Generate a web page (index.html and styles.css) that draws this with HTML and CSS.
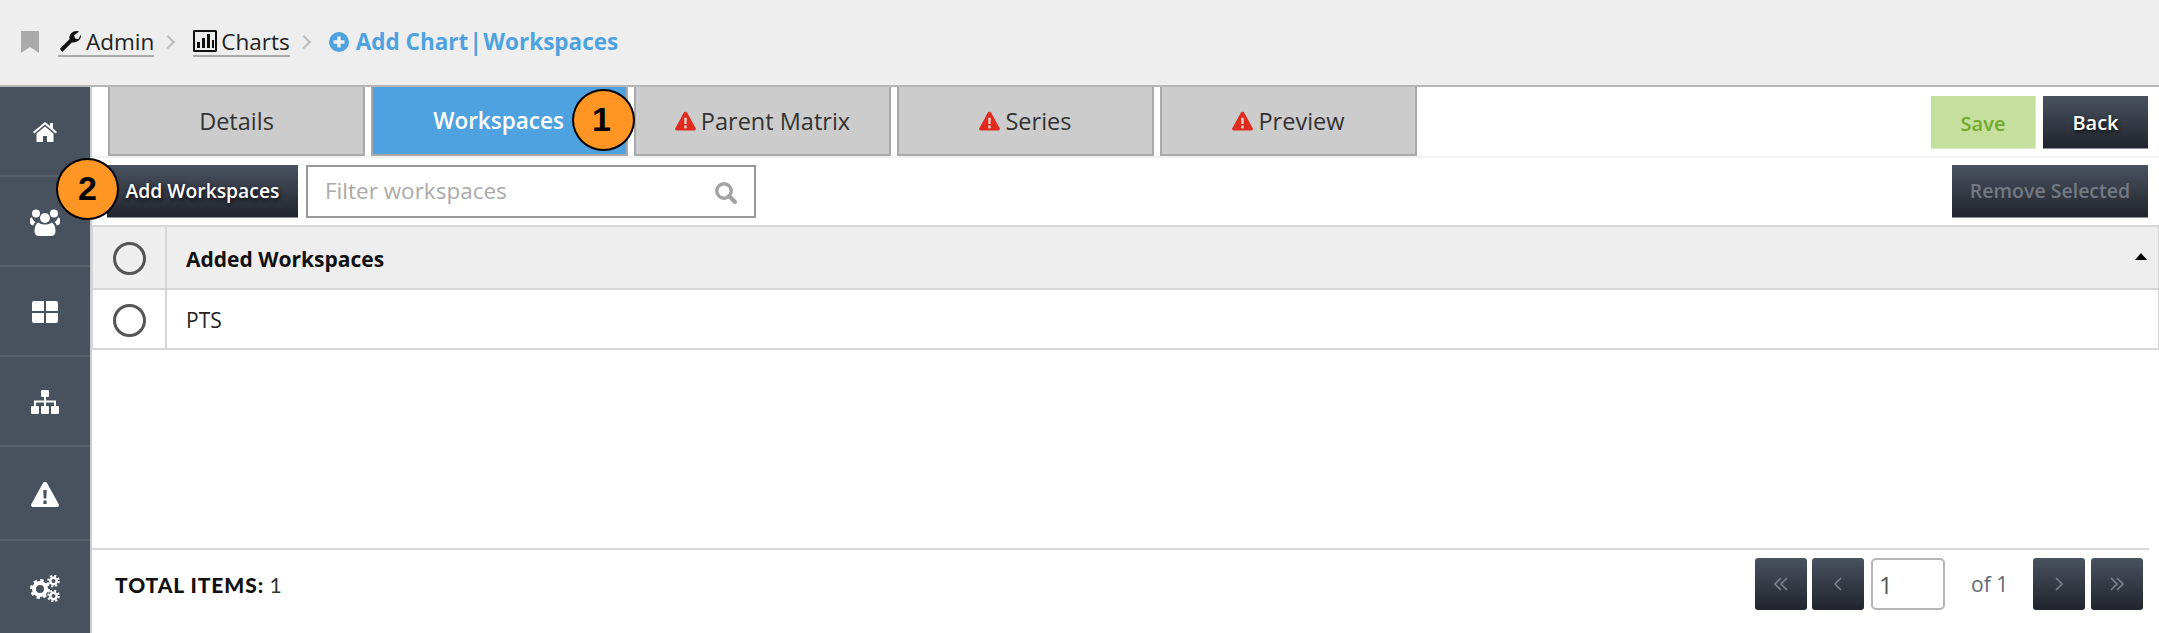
FILE: index.html
```html
<!DOCTYPE html>
<html lang="en">
<head>
  <meta charset="UTF-8">
  <title>Add Chart | Workspaces</title>
  <link rel="stylesheet" href="styles.css">
</head>
<body>
  <svg class="sprites" width="0" height="0">
    <symbol id="warn" viewBox="0 0 28 25">
      <path d="M14 0c1 0 1.800.5 2.300 1.400l11.300 20.700c.9 1.500-.2 2.900-1.800 2.900H2.200C.6 25-.5 23.600.4 22.100L11.700 1.400C12.200.5 13 0 14 0z"/>
      <path fill="#f4d6d2" d="M12.300 8h3.400l-.3 8.500h-2.800zM12.400 18.500h3.200V22h-3.200z"/>
    </symbol>
  </svg>

  <header class="topbar">
    <svg class="bookmark" viewBox="0 0 18 22"><path d="M0 0h18v22l-9-6-9 6z"/></svg>
    <a class="crumb">
      <svg class="crumb-icon" viewBox="0 0 24 24"><path d="M1 20.500 11.500 10C10.500 6 13.500 1 19 1c1 0 2 .2 3 .7l-5.500 4 1 3.500 3.500 1L24 5c.6 5.500-4.500 9.500-10 8.500L3.500 24z"/></svg>
      Admin
    </a>
    <span class="chev"></span>
    <a class="crumb">
      <svg class="crumb-icon" viewBox="0 0 24 22"><path fill-rule="evenodd" d="M0 1.500C0 .7.700 0 1.500 0h21c.8 0 1.500.7 1.500 1.500v19c0 .8-.7 1.500-1.500 1.500h-21C.7 22 0 21.300 0 20.500zM2 2v18h20V2z"/><path d="M4 12h3v6H4zM9 8h3v10H9zM14 4h3v14h-3zM19 10h2v8h-2z"/></svg>
      Charts
    </a>
    <span class="chev"></span>
    <svg class="add-icon" viewBox="0 0 20 20"><path fill-rule="evenodd" d="M10 0a10 10 0 1 1 0 20 10 10 0 0 1 0-20zM8.300 4.500v3.800H4.500v3.400h3.800v3.800h3.400v-3.800h3.800V8.300h-3.800V4.500z"/></svg>
    <span class="crumb-current">Add Chart<span class="pipe">|</span>Workspaces</span>
  </header>

  <div class="layout">
    <nav class="sidebar">
      <a class="nav-item">
        <svg width="24" height="20" viewBox="0 0 24 20"><path d="M12 0 0 10l1.300 1.500L12 2.600l10.700 8.900L24 10l-4-3.400V1h-3v3z"/><path d="M12 4.500 3.500 11.600V20H10v-6h4v6h6.500v-8.400z"/></svg>
      </a>
      <a class="nav-item">
        <svg width="30" height="27" viewBox="0 0 30 27"><circle cx="15" cy="9" r="5"/><circle cx="6" cy="4.500" r="4"/><circle cx="24" cy="4.500" r="4"/><path d="M0 10c0-1 1-1.500 2-1.500.6 2 2 3.600 3.500 4.500-1 .8-1.800 2-2.300 3.500C1 16 0 15 0 13.500zM30 10c0-1-1-1.500-2-1.500-.6 2-2 3.600-3.500 4.500 1 .8 1.800 2 2.300 3.500 2.200-.5 3.200-1.500 3.200-3z"/><path d="M8.500 13.500C10 15 12.500 15.500 15 15.500s5-.5 6.500-2c2.500 1 4 4 4 8.500 0 3-1.500 5-4.500 5H9c-3 0-4.500-2-4.500-5 0-4.500 1.500-7.500 4-8.500z"/></svg>
      </a>
      <a class="nav-item">
        <svg width="26" height="22" viewBox="0 0 26 22"><path d="M0 2a2 2 0 0 1 2-2h10v10H0zM14 0h10a2 2 0 0 1 2 2v8H14zM0 12h12v10H2a2 2 0 0 1-2-2zM14 12h12v8a2 2 0 0 1-2 2H14z"/></svg>
      </a>
      <a class="nav-item">
        <svg width="28" height="24" viewBox="0 0 28 24"><rect x="10" width="8" height="7" rx="1"/><rect y="16" width="8" height="8" rx="1"/><rect x="10" y="16" width="8" height="8" rx="1"/><rect x="20" y="16" width="8" height="8" rx="1"/><path d="M13 7h2v3.500h10V16h-2v-3.500h-8V16h-2v-3.500H5V16H3v-5.500h10z"/></svg>
      </a>
      <a class="nav-item">
        <svg width="28" height="25" viewBox="0 0 28 25"><path fill-rule="evenodd" d="M14 0c1 0 1.800.5 2.300 1.400l11.300 20.700c.9 1.500-.2 2.900-1.800 2.900H2.200C.6 25-.5 23.600.4 22.100L11.700 1.400C12.200.5 13 0 14 0zM12.300 8l.3 8.500h2.800l.3-8.500zM12.400 18.500V22h3.200v-3.500z"/></svg>
      </a>
      <a class="nav-item">
        <svg width="30" height="27" viewBox="0 0 30 27">
          <g class="gear"><circle cx="10" cy="14" r="6" fill="none" stroke-width="4"/><circle cx="10" cy="14" r="8.500" fill="none" stroke-width="3" stroke-dasharray="3.300 3.370"/></g>
          <g class="gear"><circle cx="23.500" cy="6" r="3.200" fill="none" stroke-width="2.400"/><circle cx="23.500" cy="6" r="5.300" fill="none" stroke-width="2" stroke-dasharray="2.100 2.060"/></g>
          <g class="gear"><circle cx="23.500" cy="21" r="3.200" fill="none" stroke-width="2.400"/><circle cx="23.500" cy="21" r="5.300" fill="none" stroke-width="2" stroke-dasharray="2.100 2.060"/></g>
        </svg>
      </a>
    </nav>

    <main class="content">
      <div class="tab-row">
        <div class="tabs">
          <a class="tab">Details</a>
          <a class="tab active">Workspaces</a>
          <a class="tab"><svg class="warn"><use href="#warn"/></svg>Parent Matrix</a>
          <a class="tab"><svg class="warn"><use href="#warn"/></svg>Series</a>
          <a class="tab"><svg class="warn"><use href="#warn"/></svg>Preview</a>
        </div>
        <div class="actions">
          <button class="btn btn-save">Save</button>
          <button class="btn btn-dark btn-back">Back</button>
        </div>
      </div>

      <div class="tool-row">
        <button class="btn btn-dark btn-add">Add Workspaces</button>
        <div class="filter">
          <input type="text" placeholder="Filter workspaces">
          <svg viewBox="0 0 22 22"><circle cx="9" cy="9" r="7.200" fill="none" stroke-width="3.400"/><path d="m14 14 6 6" fill="none" stroke-width="4" stroke-linecap="round"/></svg>
        </div>
        <button class="btn btn-dark btn-remove">Remove Selected</button>
      </div>

      <table class="grid">
        <thead>
          <tr>
            <th class="check-col"><span class="radio"></span></th>
            <th>Added Workspaces<span class="sort"></span></th>
          </tr>
        </thead>
        <tbody>
          <tr>
            <td class="check-col"><span class="radio"></span></td>
            <td>PTS</td>
          </tr>
        </tbody>
      </table>

      <footer class="foot">
        <div class="total"><strong>TOTAL ITEMS:</strong> 1</div>
        <div class="pager">
          <a class="page-btn"><svg viewBox="0 0 14 14"><path d="M7 1 1 7l6 6M13 1 7 7l6 6"/></svg></a>
          <a class="page-btn"><svg viewBox="0 0 14 14"><path d="M10 1 4 7l6 6"/></svg></a>
          <input class="page-input" type="text" value="1">
          <span class="page-of">of 1</span>
          <a class="page-btn next"><svg viewBox="0 0 14 14"><path d="m4 1 6 6-6 6"/></svg></a>
          <a class="page-btn"><svg viewBox="0 0 14 14"><path d="m1 1 6 6-6 6M7 1l6 6-6 6"/></svg></a>
        </div>
      </footer>
    </main>
  </div>

  <span class="callout callout-1">1</span>
  <span class="callout callout-2">2</span>
</body>
</html>
```

FILE: styles.css
```css
* {
  box-sizing: border-box;
}
html, body {
  margin: 0;
  height: 100%;
  overflow: hidden;
}
body {
  position: relative;
  font-family: "Open Sans", sans-serif;
  color: #333;
  background: #fff;
}
.sprites {
  position: absolute;
}

/* top bar */
.topbar {
  display: flex;
  align-items: center;
  height: 87px;
  padding: 0 0 2px 21px;
  background: #eee;
  border-bottom: 2px solid #b5b5b5;
}
.bookmark {
  width: 18px;
  height: 22px;
  fill: #aaa;
  margin-right: 19px;
}
.crumb {
  display: flex;
  align-items: center;
  gap: 4px;
  height: 30px;
  padding-top: 1px;
  font-size: 22.5px;
  color: #222;
  border-bottom: 2px solid #aaa;
}
.crumb-icon {
  width: 24px;
  height: 22px;
  fill: #111;
}
.chev {
  width: 10px;
  height: 10px;
  margin: 0 20px 0 9px;
  border-top: 2px solid #bbb;
  border-right: 2px solid #bbb;
  transform: rotate(45deg);
}
.add-icon {
  width: 20px;
  height: 20px;
  fill: #4da2df;
  margin-right: 7px;
}
.crumb-current {
  font-size: 22.5px;
  font-weight: 700;
  color: #4da2df;
}
.pipe {
  margin: 0 1.3px;
}

.layout {
  display: flex;
  height: 546px;
}

/* left nav */
.sidebar {
  flex: 0 0 92px;
  display: flex;
  flex-direction: column;
  background: #48525e;
  border-right: 2px solid #ccc;
}
.nav-item {
  flex: 0 0 90px;
  display: flex;
  align-items: center;
  justify-content: center;
  padding-top: 2px;
  border-bottom: 2px solid #575f6a;
}
.nav-item:nth-child(n+5) {
  flex: 1;
}
.nav-item:last-child {
  border-bottom: 0;
}
.nav-item svg {
  fill: #fff;
}
.gear {
  stroke: #fff;
}

.content {
  flex: 1;
  display: flex;
  flex-direction: column;
  min-width: 0;
}

/* tabs */
.tab-row {
  display: flex;
  justify-content: space-between;
  height: 71px;
  padding: 0 11px 0 16px;
  border-bottom: 2px solid #f2f2f2;
}
.tabs {
  display: flex;
  gap: 6px;
  height: 69px;
}
.tab {
  display: flex;
  align-items: center;
  justify-content: center;
  width: 257px;
  font-size: 23.5px;
  color: #333;
  background: #ccc;
  border: 2px solid #a9a9a9;
  border-top: 0;
}
.tab.active {
  color: #fff;
  font-size: 22.5px;
  font-weight: 600;
  background: #4da2df;
  padding-right: 2px;
}
.warn {
  width: 21px;
  height: 20px;
  fill: #e02b20;
  margin-right: 5px;
}
.actions {
  display: flex;
  gap: 7px;
  padding-top: 9px;
}

/* buttons */
.btn {
  height: 53px;
  padding: 0;
  border: 0;
  font-family: inherit;
  font-size: 20px;
  font-weight: 600;
}
.btn-dark {
  color: #fff;
  background: linear-gradient(#4a5260, #21242c);
  border-bottom: 1px solid #8d9096;
  text-shadow: 1px 2px 4px rgba(0,0,0,0.8);
}
.btn-save {
  width: 105px;
  padding-top: 2px;
  color: #72a82e;
  background: #c5e09d;
  border-right: 1px solid #dcecc4;
  border-bottom: 1px solid #dcecc4;
}
.btn-back {
  width: 105px;
}
.btn-add {
  width: 191px;
  padding-bottom: 2px;
  font-size: 19.3px;
}
.btn-remove {
  width: 196px;
  margin-left: auto;
  padding-bottom: 2px;
  font-size: 19.5px;
  color: #737983;
  text-shadow: none;
}

/* filter row */
.tool-row {
  display: flex;
  height: 67px;
  padding: 7px 11px 0 15px;
  gap: 8px;
}
.filter {
  position: relative;
  width: 450px;
  height: 53px;
}
.filter input {
  width: 100%;
  height: 100%;
  padding: 0 55px 2px 17px;
  border: 2px solid #999;
  border-radius: 0;
  outline: 0;
  font-family: inherit;
  font-size: 22.5px;
}
.filter input::placeholder {
  color: #aaa;
}
.filter svg {
  position: absolute;
  right: 19px;
  top: 17px;
  width: 22px;
  height: 22px;
  stroke: #a3a3a3;
}

/* table */
.grid {
  width: 2069px;
  margin-left: -1px;
  border-collapse: collapse;
  font-size: 21px;
  color: #222;
}
.grid th, .grid td {
  padding: 2px 0 0 19px;
  text-align: left;
  border: 2px solid #d6d6d6;
}
.grid th {
  position: relative;
  height: 63px;
  font-weight: 700;
  background: #eee;
  color: #111;
}
.grid td {
  height: 60px;
}
.grid .check-col {
  width: 74px;
  padding: 2px 0 0;
  text-align: center;
}
.radio {
  display: block;
  width: 33px;
  height: 33px;
  margin: auto;
  border: 3px solid #555;
  border-radius: 50%;
}
.sort {
  position: absolute;
  right: 11px;
  top: 26px;
  width: 0;
  height: 0;
  border: 6px solid transparent;
  border-top: 0;
  border-bottom: 7px solid #000;
}

/* footer */
.foot {
  display: flex;
  align-items: flex-start;
  justify-content: space-between;
  height: 85px;
  margin: auto 10px 0 0;
  padding: 8px 6px 0 23px;
  border-top: 2px solid #d9d9d9;
}
.total {
  margin-top: 14px;
  font-family: Lato, sans-serif;
  font-size: 21px;
  color: #333;
}
.total strong {
  font-weight: 900;
  color: #111;
  letter-spacing: 0.9px;
}
.pager {
  display: flex;
  align-items: center;
  gap: 5px;
}
.page-btn {
  display: flex;
  align-items: center;
  justify-content: center;
  width: 52px;
  height: 52px;
  background: linear-gradient(#4a5260, #21242c);
  border-radius: 3px;
}
.page-btn svg {
  width: 14px;
  height: 14px;
  fill: none;
  stroke: #7c828c;
  stroke-width: 1.6;
}
.page-input {
  width: 74px;
  height: 52px;
  margin-left: 2px;
  padding: 0 0 0 6px;
  border: 2px solid #b5b5b5;
  border-radius: 5px;
  outline: 0;
  font-family: inherit;
  font-size: 24px;
  color: #555;
}
.page-of {
  width: 78px;
  padding-left: 21px;
  font-size: 21px;
  color: #5e6a78;
}
.page-btn.next {
  margin-right: 1px;
}

/* numbered callouts laid over the page */
.callout {
  position: absolute;
  display: flex;
  align-items: center;
  justify-content: center;
  width: 63px;
  height: 62px;
  padding-bottom: 1px;
  font-family: "Liberation Sans", Arial, sans-serif;
  font-size: 34px;
  font-weight: 700;
  color: #000;
  background: #ff9624;
  border: 2px solid #000;
  border-radius: 50%;
}
.callout-1 {
  left: 572px;
  top: 89px;
  padding-right: 4px;
}
.callout-2 {
  left: 56px;
  top: 158px;
}
```
